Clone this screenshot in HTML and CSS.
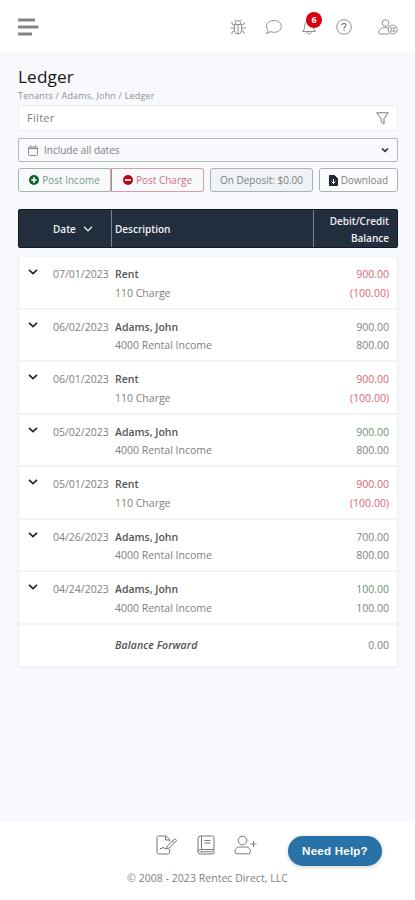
FILE: index.html
```html
<!DOCTYPE html>
<html lang="en">
<head>
<meta charset="utf-8">
<title>Ledger</title>
<link rel="stylesheet" href="styles.css">
</head>
<body>
<header class="topbar">
  <svg class="menu" width="22" height="18" viewBox="0 0 22 18"><path d="M0 2h17M0 9h20.500M0 16h14"/></svg>
  <nav class="tools">
    <svg width="16" height="16" viewBox="0 0 16 16"><path d="M4.5 5.5h7v6a3.5 3.5 0 0 1-7 0zM5.5 5.5V4a2.5 2.5 0 0 1 5 0v1.500M8 6v9M4.500 6.500L2 5V3M11.500 6.500L14 5V3M.5 9h4M11.500 9h4M4.500 11.500L2 13v2M11.500 11.500L14 13v2M5.500 2L4.500 .5M10.500 2l1-1.500"/></svg>
    <svg width="17" height="16" viewBox="0 0 17 16"><path d="M3.200 11.500C-1 7 2.500 1.500 9 1.500c4.500 0 7.300 2.700 7.300 5.800 0 4.500-5.300 7.300-10.300 5.400L1 14.500c1.300-.8 2-1.800 2.200-3z"/></svg>
    <span class="bell">
      <svg width="16" height="16" viewBox="0 0 16 16"><path d="M1.500 12.500c2-2 2-3.500 2.200-6C4 3.700 5.700 2 8 2s4 1.700 4.300 4.500c.2 2.500.2 4 2.200 6zM6 13c.3 2.600 3.700 2.600 4 0M8 .5V2"/></svg>
      <b class="badge">6</b>
    </span>
    <svg width="16" height="16" viewBox="0 0 16 16"><circle cx="8" cy="8" r="7.300"/><path class="mark" d="M5.900 6.200C6 3.700 10 3.700 10 6.100 10 7.700 8 7.700 8 9.400M8 10.800v1.300"/></svg>
    <svg class="account" width="20" height="16" viewBox="0 0 20 16"><circle cx="7.500" cy="4" r="3.300"/><path d="M10 9C5 7.500.7 9.800.7 13.500q0 1.500 1.500 1.500H11"/><circle cx="14.700" cy="10.500" r="4.400"/><circle cx="14.700" cy="10.500" r="1.700"/><path d="M11.500 7.300l2 2M18 7.300l-2 2M11.500 13.700l2-2M18 13.700l-2-2"/></svg>
  </nav>
</header>
<main>
  <h1>Ledger</h1>
  <p class="crumbs">Tenants / Adams, John / Ledger</p>
  <div class="filter"><span>Filter</span>
    <svg width="13" height="13" viewBox="0 0 13 13"><path d="M.7.800h11.600L8 6.500V12L5.200 9.800V6.500z"/></svg>
  </div>
  <div class="dates">
    <svg width="10" height="11" viewBox="0 0 10 11"><path d="M1.500 2h7q1 0 1 1v6.500q0 1-1 1h-7q-1 0-1-1V3q0-1 1-1zM2.700.3V2M7.300.3V2M.5 3.500h9"/></svg>
    <span>Include all dates</span>
    <svg class="caret" width="8" height="6" viewBox="0 0 8 6"><path d="M1 1.500l3 2.800 3-2.800"/></svg>
  </div>
  <div class="actions">
    <div class="pair">
      <span class="btn income"><svg width="10" height="10" viewBox="0 0 10 10"><circle cx="5" cy="5" r="5"/><path d="M5 2.300v5.400M2.300 5h5.400"/></svg><span>Post Income</span></span>
      <span class="btn charge"><svg width="10" height="10" viewBox="0 0 10 10"><circle cx="5" cy="5" r="5"/><path d="M2 5h6"/></svg><span>Post Charge</span></span>
    </div>
    <span class="btn deposit"><span>On Deposit: $0.00</span></span>
    <span class="btn download"><svg width="9" height="11" viewBox="0 0 9 11"><path class="sheet" d="M.5.500h5L8.500 3.500v7h-8z"/><path d="M4.500 4v4.500M2.500 6.500l2 2 2-2"/></svg><span>Download</span></span>
  </div>
  <div class="head">
    <span class="h-date">Date <svg width="10" height="6" viewBox="0 0 10 6"><path d="M1 .8l4 4 4-4"/></svg></span>
    <span class="h-desc">Description</span>
    <span class="h-amount">Debit/Credit<br>Balance</span>
  </div>
  <div class="rows">
    <div class="row"><svg class="open" width="10" height="6" viewBox="0 0 10 6"><path d="M1 .8l4 3.800 4-3.800"/></svg><span class="date">07/01/2023</span><div class="desc"><b>Rent</b><span>110 Charge</span></div><div class="amount"><span class="red">900.00</span><span class="red">(100.00)</span></div></div>
    <div class="row"><svg class="open" width="10" height="6" viewBox="0 0 10 6"><path d="M1 .8l4 3.800 4-3.800"/></svg><span class="date">06/02/2023</span><div class="desc"><b>Adams, John</b><span>4000 Rental Income</span></div><div class="amount"><span class="green">900.00</span><span>800.00</span></div></div>
    <div class="row"><svg class="open" width="10" height="6" viewBox="0 0 10 6"><path d="M1 .8l4 3.800 4-3.800"/></svg><span class="date">06/01/2023</span><div class="desc"><b>Rent</b><span>110 Charge</span></div><div class="amount"><span class="red">900.00</span><span class="red">(100.00)</span></div></div>
    <div class="row"><svg class="open" width="10" height="6" viewBox="0 0 10 6"><path d="M1 .8l4 3.800 4-3.800"/></svg><span class="date">05/02/2023</span><div class="desc"><b>Adams, John</b><span>4000 Rental Income</span></div><div class="amount"><span class="green">900.00</span><span>800.00</span></div></div>
    <div class="row"><svg class="open" width="10" height="6" viewBox="0 0 10 6"><path d="M1 .8l4 3.800 4-3.800"/></svg><span class="date">05/01/2023</span><div class="desc"><b>Rent</b><span>110 Charge</span></div><div class="amount"><span class="red">900.00</span><span class="red">(100.00)</span></div></div>
    <div class="row"><svg class="open" width="10" height="6" viewBox="0 0 10 6"><path d="M1 .8l4 3.800 4-3.800"/></svg><span class="date">04/26/2023</span><div class="desc"><b>Adams, John</b><span>4000 Rental Income</span></div><div class="amount"><span class="green">700.00</span><span>800.00</span></div></div>
    <div class="row"><svg class="open" width="10" height="6" viewBox="0 0 10 6"><path d="M1 .8l4 3.800 4-3.800"/></svg><span class="date">04/24/2023</span><div class="desc"><b>Adams, John</b><span>4000 Rental Income</span></div><div class="amount"><span class="green">100.00</span><span>100.00</span></div></div>
    <div class="row forward"><em>Balance Forward</em><span>0.00</span></div>
  </div>
</main>
<footer>
  <div class="links">
    <svg width="22" height="20" viewBox="0 0 22 20"><path d="M13.500 14v3.300q0 1.700-1.700 1.700H2.700Q1 19 1 17.300V2.700Q1 1 2.700 1h7.500l3.300 3.500v2M9.500 1v4h4M4 13.500h2l1-1.500 1.500 1.500h1.500M10.500 14l.7-3 7-6.500q1.200-.8 2 .2.700 1-.2 1.800l-7 6.600zM16.700 6l1.800 2"/></svg>
    <svg width="18" height="20" viewBox="0 0 18 20"><path d="M3.500 1h12q1.500 0 1.500 1.500v12H3.500Q1 14.500 1 16.700V3.500Q1 1 3.500 1zM4.500 1v13.500M1 16.700Q1 19 3.500 19H16q1 0 1-1v-3.500M3 16.800h13M7.500 5.500h6M7.500 8h6"/></svg>
    <svg width="23" height="20" viewBox="0 0 23 20"><circle cx="8.500" cy="5.500" r="4.300"/><path d="M1 16.500C1 13 3.500 12 6 12h5.500c2.500 0 5 1 5 4.500q0 2.300-2.300 2.300H3.300Q1 18.800 1 16.500zM19.500 6v6M16.500 9h6"/></svg>
  </div>
  <p>© 2008 - 2023 Rentec Direct, LLC</p>
  <span class="help">Need Help?</span>
</footer>
</body>
</html>
```
FILE: styles.css
```css
* { box-sizing: border-box; }
body {
  margin: 0;
  height: 900px;
  display: flex;
  flex-direction: column;
  background: #f7f9fd;
  color: #808080;
  font: 10.5px/18.7px "Open Sans", "Noto Sans", sans-serif;
}
svg { display: block; flex: none; fill: none; stroke: #777; stroke-width: 1; }
h1, p { margin: 0; }
.topbar {
  height: 52px;
  padding: 2px 17px 0 18px;
  display: flex;
  align-items: center;
  justify-content: space-between;
  background: #fff;
}
.menu { stroke: #858585; stroke-width: 2.8; }
.tools { display: flex; align-items: center; gap: 19px; }
.tools svg { stroke: #848484; stroke-width: .9; }
.bell { position: relative; }
.tools .account { margin-left: 7px; }
.tools .mark { stroke-width: 1.3; }
.badge {
  position: absolute;
  left: 5px;
  top: -7px;
  width: 16px;
  height: 16px;
  border-radius: 50%;
  background: #d50008;
  color: #fff;
  font-size: 9px;
  line-height: 16px;
  text-align: center;
}
main { flex: 1; padding: 13px 17px 0 18px; }
h1 { font-size: 17.2px; line-height: 24px; font-weight: 500; letter-spacing: .15px; color: #171717; }
.crumbs { font-size: 9px; line-height: 11px; letter-spacing: .2px; color: #909090; margin-top: 1px; }
.filter {
  margin-top: 4px;
  height: 26px;
  padding: 0 8px;
  display: flex;
  align-items: center;
  justify-content: space-between;
  background: #fff;
  border: 1px solid #eceef1;
  font-size: 11px;
  letter-spacing: .3px;
}
.dates {
  margin-top: 7px;
  height: 24px;
  padding: 0 8px 0 9px;
  display: flex;
  align-items: center;
  gap: 6px;
  border: 1px solid #b3b7bc;
  border-radius: 2px;
  font-size: 10px;
}
.dates svg { stroke: #8b8b8b; }
.dates .caret { margin-left: auto; stroke: #333; stroke-width: 1.7; }
.actions { margin-top: 6px; display: flex; justify-content: space-between; font-size: 10px; }
.pair { display: flex; }
.btn {
  height: 24px;
  display: flex;
  align-items: center;
  justify-content: center;
  gap: 3px;
  border: 1px solid #a9afb3;
  border-radius: 3px;
  white-space: nowrap;
}
.income { width: 93px; color: #7d9a89; border-color: #a3b5aa; border-radius: 3px 0 0 3px; }
.income circle { fill: #09652c; stroke: none; }
.income path, .charge path { stroke: #fff; stroke-width: 1.7; }
.charge { width: 93px; color: #d0717e; border-color: #dc9ba5; border-left-color: #c48690; border-radius: 0 3px 3px 0; }
.charge circle { fill: #b80716; stroke: none; }
.deposit { width: 103px; background: #eff3f6; }
.download { width: 79px; background: #fbfcfe; }
.sheet { fill: #222936; stroke: #222936; }
.download path:last-child { stroke: #fff; }
.head {
  height: 39px;
  margin-top: 17px;
  display: grid;
  grid-template-columns: 92px 1fr 84px;
  background: #222e3e;
  border: 1px solid #111a26;
  border-radius: 2px;
  color: #f0f1f3;
  font-weight: 600;
  font-size: 10px;
  line-height: 17px;
}
.head span { display: flex; align-items: center; }
.head .h-date { padding: 1px 0 0 34px; gap: 7px; }
.h-date svg { stroke: #e8eaec; stroke-width: 1.3; }
.head .h-desc { padding: 1px 0 0 3px; border-left: 1px solid #7c8591; }
.head .h-amount { display: block; padding: 3px 8px 0 0; text-align: right; border-left: 1px solid #7c8591; }
.rows { margin-top: 9px; background: #fff; border: 1px solid #eff0f2; border-top: 0; box-shadow: 0 0 6px rgba(40, 50, 70, .04); }
.row {
  height: 52.5px;
  padding: 8px 8px 0 9px;
  display: grid;
  grid-template-columns: 25px 62px 1fr auto;
  align-items: start;
  border-bottom: 2px solid #f1f2f3;
}
.open { margin-top: 4px; stroke: #222; stroke-width: 1.6; }
.desc, .amount { display: flex; flex-direction: column; }
.desc b { color: #555; font-weight: 600; }
.amount { text-align: right; }
.red { color: #d8656f; }
.green { color: #718b79; }
.forward { height: 41px; padding: 0 8px 0 96px; display: flex; align-items: center; justify-content: space-between; border: 0; }
em { color: #505050; font-weight: 600; letter-spacing: .1px; }
footer { position: relative; height: 78px; padding-top: 13px; background: #fff; }
.links { display: flex; justify-content: center; gap: 19px; padding-right: 2px; }
footer p { margin-top: 15px; text-align: center; line-height: 17px; font-size: 10.5px; letter-spacing: .04px; }
.help {
  position: absolute;
  left: 288px;
  top: 14px;
  width: 94px;
  height: 30px;
  border-radius: 15px;
  background: #2872a7;
  color: #fff;
  font: bold 11.5px/30px "Liberation Sans", sans-serif;
  letter-spacing: .25px;
  text-align: center;
  box-shadow: 0 1px 4px rgba(0, 0, 0, .2);
}
```
